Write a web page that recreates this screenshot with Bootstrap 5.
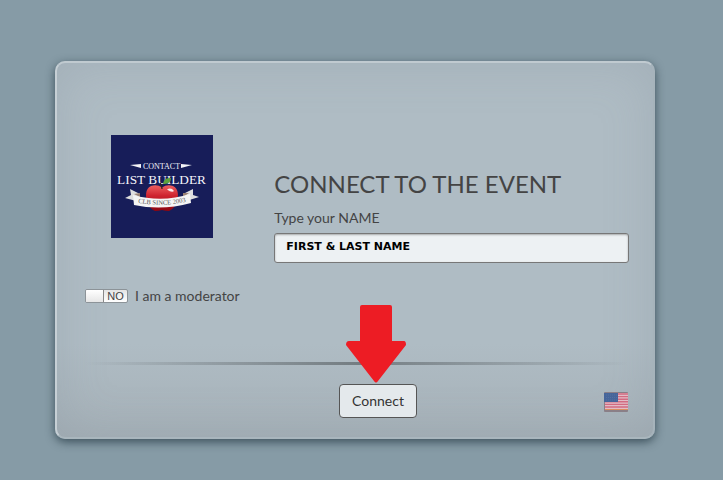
<!DOCTYPE html>
<html lang="en">
<head>
<meta charset="utf-8">
<meta name="viewport" content="width=device-width, initial-scale=1">
<title>Connect to the event</title>
<link href="https://cdn.jsdelivr.net/npm/bootstrap@5.3.0/dist/css/bootstrap.min.css" rel="stylesheet">
<style>
  body { background: #869ba6; color: #444; font-family: Lato, sans-serif; font-size: 14px; line-height: 20px; }
  .page { padding: 61px 68px 40px 55px; }
  .login-panel {
    max-width: 600px; padding: 72px 24px 19px 28px;
    border: 2px solid; border-color: #c0cad0 #a6b3bb #a9b6bd #c6cfd5; border-radius: 10px;
    background: linear-gradient(#afbcc4 0, #afbcc4 75%, #a6b1b8 100%);
    box-shadow: 0 3px 10px rgba(20, 40, 50, .65), inset 0 0 50px rgba(120, 135, 145, .24);
  }
  .event-logo { width: 103px; height: 103px; margin-left: 26px; }
  .event-title { font-size: 24px; line-height: 30px; font-weight: 400; }
  .fields { padding-top: 34px; }
  .name-label { line-height: 22px; }
  .name-box {
    height: 30px; padding: 0 11px 4px; border: 1px solid #777; border-radius: 3px;
    background: #edf1f3; color: #000; font-family: "DejaVu Sans", sans-serif; font-size: 11px; font-weight: 700;
    box-shadow: inset 0 1px 2px rgba(0, 0, 0, .3);
  }
  .name-box::placeholder { color: #000; opacity: 1; }
  .moderator { margin-top: 48px; gap: 7px; }
  .switch-box { width: 43px; height: 14px; border: 1px solid #8c9398; border-radius: 2px; background: linear-gradient(#e4e4e4, #fff); overflow: hidden; }
  .switch-box input { appearance: none; width: 18px; height: 12px; margin: 0; border-right: 1px solid #888; background: linear-gradient(#fff, #e6e6e6); }
  .switch-state { font: 11px/12px "Liberation Sans", sans-serif; }
  .divider { height: 3px; margin-top: 56px; background: linear-gradient(90deg, transparent, #747d82 50%, transparent); }
  .connect-btn { height: 34px; padding: 0 12px; border: 1px solid #555; border-radius: 4px; background: #e4e9ec; color: #333; font-size: 14px; line-height: 20px; }
  .connect-btn:hover { background: #f1f4f6; }
  .actions { margin-top: 19px; }
  .connect-wrap { margin-left: 42px; }
  .pointer-arrow { bottom: 100%; margin-bottom: 1px; pointer-events: none; }
  .flag-btn { line-height: 0; }
</style>
<script src="https://cdn.jsdelivr.net/npm/bootstrap@5.3.0/dist/js/bootstrap.bundle.min.js"></script>
</head>
<body>
<main class="page">
  <form class="login-panel mx-auto">
    <div class="row g-0">
      <div class="col-4">
        <svg class="event-logo d-block" viewBox="0 0 103 103" role="img" aria-label="Contact List Builder">
          <defs>
            <linearGradient id="apple" x2="0" y2="1"><stop offset="0" stop-color="#ee5f60"/><stop offset=".4" stop-color="#cf2430"/><stop offset="1" stop-color="#8c0410"/></linearGradient>
            <path id="band" d="M24 67Q51 73 78 66"/>
          </defs>
          <rect width="102" height="103" fill="#171d59"/>
          <path d="M19 30L30 29V33zM81 30L70 29V33z" fill="#f4f4f7"/>
          <g fill="#f4f4fa" font-family="Liberation Serif, serif" text-anchor="middle">
            <text x="50.500" y="33.500" font-size="8">CONTACT</text>
            <text x="50.500" y="48.500" font-size="13.300">LIST BUILDER</text>
          </g>
          <path d="M51 52.500Q46 49 40 51C34 54 34 62 37 68Q39 74 44 76Q48 76 51 75Q54 76 58 76Q63 74 65 68C68 62 68 54 62 51Q56 49 51 52.500z" fill="url(#apple)"/>
          <path d="M51 54Q51 50 49 48" stroke="#33231c" stroke-width="1.300" fill="none"/>
          <path d="M52 49Q53 42 60 43Q60 49 52 49z" fill="#5da33b"/>
          <path d="M56 54.500Q60 52 63 56Q61 58 56 54.500z" fill="#fff" opacity=".9"/>
          <path d="M19 54L29 59V67L14 63L20 60zM82 54L72 59V67L88 62L82 60z" fill="#dedede"/>
          <path d="M23 59L29 58V62zM78 58L72 58V62z" fill="#9b8275"/>
          <path d="M22 60Q51 68 79 59L80 68Q51 76 23 70z" fill="#f5f5f5"/>
          <text font-family="Liberation Serif, serif" font-size="6.600" fill="#555" text-anchor="middle"><textPath href="#band" startOffset="50%">CLB SINCE 2003</textPath></text>
        </svg>
        <label class="moderator d-flex align-items-center text-nowrap">
          <span class="switch-box d-flex align-items-center flex-shrink-0">
            <input type="checkbox" role="switch">
            <span class="switch-state flex-grow-1 text-center">NO</span>
          </span>
          I am a moderator
        </label>
      </div>
      <div class="col-8 ps-2 fields">
        <h1 class="event-title mb-2">CONNECT TO THE EVENT</h1>
        <label for="name" class="name-label d-block mb-1">Type your NAME</label>
        <input id="name" class="name-box w-100" type="text" placeholder="FIRST &amp; LAST NAME">
      </div>
    </div>
    <div class="divider"></div>
    <div class="actions row g-0 align-items-center">
      <div class="col-4 offset-4 text-center">
        <div class="connect-wrap position-relative d-inline-block align-top">
          <svg class="pointer-arrow position-absolute start-50 translate-middle-x" width="64" height="78" viewBox="0 0 64 78" aria-hidden="true">
            <path d="M16 0H44Q46 0 46 2V36H58Q60 36 60 40L32 76Q30 79 28 76L0 40Q0 36 3 36H14V2Q14 0 16 0z" fill="#ed1c24"/>
          </svg>
          <button type="submit" class="connect-btn">Connect</button>
        </div>
      </div>
      <div class="col-4 text-end">
        <button type="button" class="flag-btn border-0 bg-transparent p-0" aria-label="Language: English (US)">
          <svg width="25" height="20" viewBox="0 0 25 20" aria-hidden="true">
            <rect width="24" height="20" rx="1" fill="#8a7f87"/>
            <rect x="1" y="1" width="23" height="17" fill="#e3bcc6"/>
            <path d="M1 2H24M1 4.600H24M1 7.200H24M1 9.800H24M1 12.400H24M1 15H24" stroke="#d26b81" stroke-width="1.400"/>
            <path d="M1 17.500H24" stroke="#d99060"/>
            <rect x="0" y="1" width="14" height="9" fill="#46659a"/>
            <path d="M2 3H14M2 5.500H14M2 8H14" stroke="#5873a2" stroke-width=".8" stroke-dasharray="1 1"/>
          </svg>
        </button>
      </div>
    </div>
  </form>
</main>
</body>
</html>
